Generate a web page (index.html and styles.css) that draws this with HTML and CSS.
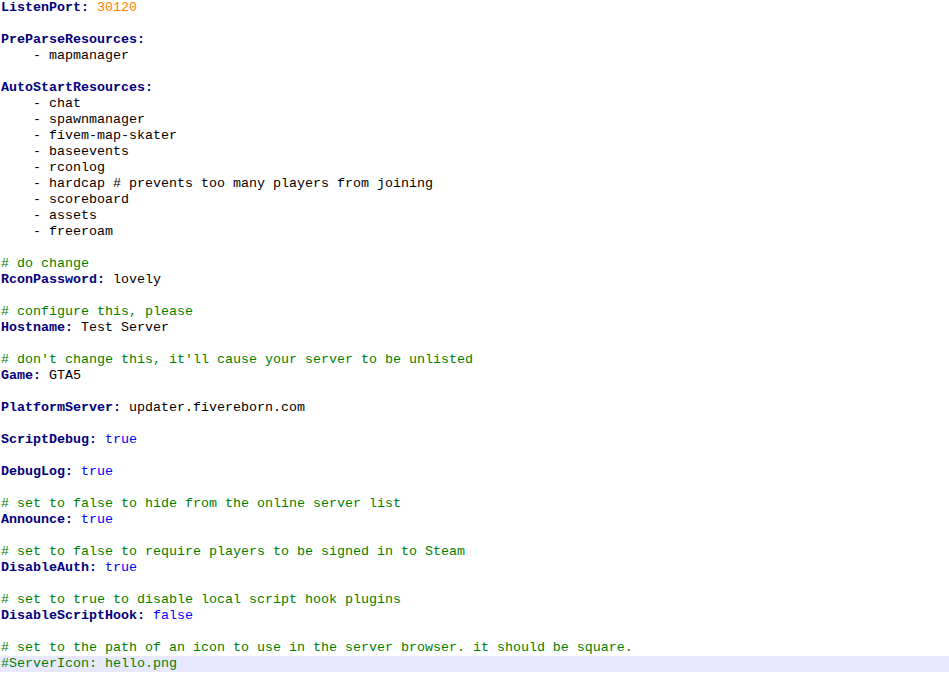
FILE: index.html
```html
<!DOCTYPE html>
<html lang="en">

<head>
    <meta charset="utf-8">
    <title>citmp-server.yml</title>
    <link rel="stylesheet" href="styles.css">
</head>

<body>
    <main class="editor">
        <div class="line"><span class="key">ListenPort:</span> <span class="num">30120</span></div>
        <div class="line"></div>
        <div class="line"><span class="key">PreParseResources:</span></div>
        <div class="line">    - mapmanager</div>
        <div class="line"></div>
        <div class="line"><span class="key">AutoStartResources:</span></div>
        <div class="line">    - chat</div>
        <div class="line">    - spawnmanager</div>
        <div class="line">    - fivem-map-skater</div>
        <div class="line">    - baseevents</div>
        <div class="line">    - rconlog</div>
        <div class="line">    - hardcap # prevents too many players from joining</div>
        <div class="line">    - scoreboard</div>
        <div class="line">    - assets</div>
        <div class="line">    - freeroam</div>
        <div class="line"></div>
        <div class="line"><span class="comment"># do change</span></div>
        <div class="line"><span class="key">RconPassword:</span> lovely</div>
        <div class="line"></div>
        <div class="line"><span class="comment"># configure this, please</span></div>
        <div class="line"><span class="key">Hostname:</span> Test Server</div>
        <div class="line"></div>
        <div class="line"><span class="comment"># don't change this, it'll cause your server to be unlisted</span></div>
        <div class="line"><span class="key">Game:</span> GTA5</div>
        <div class="line"></div>
        <div class="line"><span class="key">PlatformServer:</span> updater.fivereborn.com</div>
        <div class="line"></div>
        <div class="line"><span class="key">ScriptDebug:</span> <span class="bool">true</span></div>
        <div class="line"></div>
        <div class="line"><span class="key">DebugLog:</span> <span class="bool">true</span></div>
        <div class="line"></div>
        <div class="line"><span class="comment"># set to false to hide from the online server list</span></div>
        <div class="line"><span class="key">Announce:</span> <span class="bool">true</span></div>
        <div class="line"></div>
        <div class="line"><span class="comment"># set to false to require players to be signed in to Steam</span></div>
        <div class="line"><span class="key">DisableAuth:</span> <span class="bool">true</span></div>
        <div class="line"></div>
        <div class="line"><span class="comment"># set to true to disable local script hook plugins</span></div>
        <div class="line"><span class="key">DisableScriptHook:</span> <span class="bool">false</span></div>
        <div class="line"></div>
        <div class="line"><span class="comment"># set to the path of an icon to use in the server browser. it should be square.</span></div>
        <div class="line current"><span class="comment">#ServerIcon: hello.png</span></div>
    </main>
</body>

</html>
```

FILE: styles.css
```css
body {
    margin: 0;
    background-color: white;
}

.editor {
    padding-top: 0;
    font-family: "Liberation Mono", "Courier New", monospace;
    font-size: 13.333px;
    color: black;
}

.line {
    height: 16px;
    line-height: 16px;
    padding-left: 1px;
    white-space: pre;
}

.current {
    background-color: #e8e8ff;
}

.key {
    color: #000080;
    font-weight: bold;
}

.num {
    color: #ff8000;
}

.bool {
    color: #0000ff;
}

.comment {
    color: #008000;
}
```
